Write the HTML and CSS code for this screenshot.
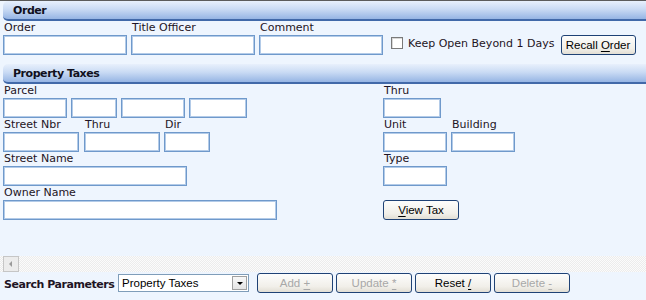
FILE: index.html
```html
<!DOCTYPE html>
<html lang="en">
  <head>
    <meta charset="UTF-8" />
    <title>Order - Property Taxes</title>
    <link rel="stylesheet" href="styles.css">
  </head>
  <body>
    <div class="page">
      <div class="bar"><span>Order</span></div>
      <div class="order-row">
        <div class="field">
          <label>Order</label>
          <input type="text" class="w124">
        </div>
        <div class="field">
          <label>Title Officer</label>
          <input type="text" class="w124">
        </div>
        <div class="field">
          <label>Comment</label>
          <input type="text" class="w124">
        </div>
        <div class="keep">
          <input type="checkbox" class="check">
          <span>Keep Open Beyond 1 Days</span>
        </div>
        <button class="btn recall">Recall <u>O</u>rder</button>
      </div>

      <div class="bar second"><span>Property Taxes</span></div>
      <div class="tax-grid">
        <div class="field">
          <label>Parcel</label>
          <div class="inputs">
            <input type="text" class="w64">
            <input type="text" class="w46">
            <input type="text" class="w64">
            <input type="text" class="w58">
          </div>
        </div>
        <div class="field">
          <label>Thru</label>
          <input type="text" class="w58">
        </div>

        <div class="inputs">
          <div class="field nbr">
            <label>Street Nbr</label>
            <input type="text" class="w76">
          </div>
          <div class="field">
            <label>Thru</label>
            <input type="text" class="w76">
          </div>
          <div class="field">
            <label>Dir</label>
            <input type="text" class="w46">
          </div>
        </div>
        <div class="inputs">
          <div class="field">
            <label>Unit</label>
            <input type="text" class="w64">
          </div>
          <div class="field">
            <label>Building</label>
            <input type="text" class="w64">
          </div>
        </div>

        <div class="field">
          <label>Street Name</label>
          <input type="text" class="w184">
        </div>
        <div class="field">
          <label>Type</label>
          <input type="text" class="w64">
        </div>

        <div class="field">
          <label>Owner Name</label>
          <input type="text" class="w274">
        </div>
        <div class="field">
          <label>&nbsp;</label>
          <button class="btn view"><u>V</u>iew Tax</button>
        </div>
      </div>

      <div class="scroller">
        <div class="arrow-left"></div>
      </div>

      <div class="search-row">
        <span class="search-label">Search Parameters</span>
        <div class="select">
          <span>Property Taxes</span>
          <div class="drop"></div>
        </div>
        <button class="btn act" disabled>Add <u>+</u></button>
        <button class="btn act" disabled>Update <u>*</u></button>
        <button class="btn act">Reset <u>/</u></button>
        <button class="btn act" disabled>Delete <u>-</u></button>
      </div>
    </div>
  </body>
</html>
```

FILE: styles.css
```css
* {
  box-sizing: border-box;
}

body {
  margin: 0;
  background-color: #eef5fe;
  font-family: "DejaVu Sans", Verdana, sans-serif;
  font-size: 11px;
  color: #1e1424;
}

.page {
  border-top: 1px solid #5c5c5c;
  height: 300px;
}

.bar {
  margin-left: 3px;
  height: 20px;
  border-radius: 5px 0 0 5px;
  border-bottom: 2px solid #4169a9;
  background: linear-gradient(#e8f0fc, #cadbf4 45%, #96b5e4);
  font-weight: bold;
  letter-spacing: -0.45px;
  padding-left: 10px;
  line-height: 19px;
  color: #101020;
}

.bar.second {
  margin-top: 9px;
}

.order-row {
  display: flex;
  align-items: flex-end;
  padding-left: 3px;
  gap: 4px;
}

.field {
  display: flex;
  flex-direction: column;
}

.field label {
  height: 14px;
  line-height: 14px;
  padding-left: 1px;
}

input[type="text"] {
  height: 20px;
  border: 1px solid #6f99cb;
  box-shadow: inset 0 0 0 1px #b3cbe8;
  background: white;
  margin: 0;
}

.w46 { width: 46px; }
.w58 { width: 58px; }
.w64 { width: 64px; }
.w76 { width: 76px; }
.w124 { width: 124px; }
.w184 { width: 184px; }
.w274 { width: 274px; }

.keep {
  display: flex;
  align-items: center;
  height: 20px;
  margin-left: 4px;
  margin-bottom: 2px;
}

.check {
  appearance: none;
  width: 12px;
  height: 12px;
  margin: 0 5px 0 0;
  border: 1px solid #7a7a7a;
  background: #fff;
  box-shadow: inset 1px 1px 0 #d8d8d8;
}

.btn {
  font-family: "Liberation Sans", Arial, sans-serif;
  font-size: 11.5px;
  color: #000;
  height: 20px;
  width: 76px;
  border: 1px solid #1f4275;
  border-radius: 3px;
  background: linear-gradient(#fdfdfc, #f1efe9 70%, #e2ded4);
  padding: 0;
  margin: 0;
}

.btn u {
  text-underline-offset: 2px;
}

.recall {
  margin-left: 2px;
  width: 75px;
}

.tax-grid {
  display: grid;
  grid-template-columns: 380px 1fr;
  padding-left: 3px;
}

.inputs {
  display: flex;
  gap: 4px;
}

.nbr {
  margin-right: 1px;
}

.view {
  width: 76px;
  height: 20px;
}

.scroller {
  margin-top: 36px;
  height: 16px;
  padding-left: 3px;
  background-color: #fbfbfb;
  background-image: repeating-conic-gradient(#ececec 0 25%, #fbfbfb 0 50%);
  background-size: 2px 2px;
}

.arrow-left {
  width: 16px;
  height: 16px;
  background: #ececec;
  border: 1px solid #c6c6c6;
  position: relative;
}

.arrow-left::after {
  content: "";
  position: absolute;
  left: 5px;
  top: 4px;
  border-right: 3px solid #9a9a9a;
  border-top: 3px solid transparent;
  border-bottom: 3px solid transparent;
}

.search-row {
  display: flex;
  align-items: center;
  gap: 3px;
  padding-left: 4px;
  height: 21px;
}

.search-label {
  font-weight: bold;
  letter-spacing: -0.45px;
  padding-top: 3px;
  width: 111px;
}

.select {
  width: 131px;
  height: 18px;
  border: 1px solid #7f9db9;
  background: #fff;
  display: flex;
  align-items: center;
  font-family: "Liberation Sans", Arial, sans-serif;
  font-size: 11.5px;
  color: #000;
  padding-left: 3px;
  margin-right: 5px;
}

.select span {
  flex: 1;
}

.drop {
  width: 15px;
  height: 14px;
  margin-right: 1px;
  border: 1px solid #a0a0a0;
  background: linear-gradient(#f8f8f8, #e4e4e4);
  position: relative;
}

.drop::after {
  content: "";
  position: absolute;
  left: 4px;
  top: 5px;
  border-top: 3px solid #000;
  border-left: 3px solid transparent;
  border-right: 3px solid transparent;
}

.act {
  width: 76px;
}

.act:disabled {
  color: #a8a8a8;
}
```
